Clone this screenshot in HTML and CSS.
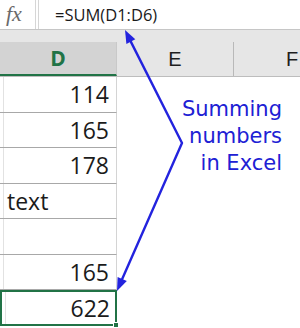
FILE: index.html
```html
<!DOCTYPE html>
<html lang="en">
<head>
  <meta charset="UTF-8" />
  <title>Summing numbers in Excel</title>
  <link rel="stylesheet" href="styles.css">
</head>
<body>
  <div class="sheet">
    <!-- formula bar -->
    <div class="formula-bar">
      <div class="fx">fx</div>
      <div class="formula">=SUM(D1:D6)</div>
    </div>
    <div class="band"></div>

    <!-- column headers -->
    <div class="grid headers">
      <div class="col-head active">D</div>
      <div class="col-head">E</div>
      <div class="col-head">F</div>
    </div>

    <!-- cells -->
    <div class="grid rows">
      <div class="cell num">114</div><div></div><div></div>
      <div class="cell num">165</div><div></div><div></div>
      <div class="cell num">178</div><div></div><div></div>
      <div class="cell">text</div><div></div><div></div>
      <div class="cell"></div><div></div><div></div>
      <div class="cell num">165</div><div></div><div></div>
      <div class="cell num selected">622<span class="handle"></span></div><div></div><div></div>
    </div>

    <div class="note">Summing<br>numbers<br>in Excel</div>

    <svg class="arrows" width="300" height="328" viewBox="0 0 300 328">
      <g stroke="#2323de" stroke-width="2.4" fill="none" stroke-linecap="round" stroke-linejoin="round">
        <polyline points="130.8,41.6 182,143 122.2,279.1" />
      </g>
      <g fill="#2323de">
        <polygon points="125,30 135.3,39.3 126.4,43.9" />
        <polygon points="117,291 126.8,281.1 117.6,277.1" />
      </g>
    </svg>
  </div>
</body>
</html>
```

FILE: styles.css
```css
* { box-sizing: border-box; }
body {
  margin: 0;
  background: #fff;
  font-family: "Open Sans", "Liberation Sans", sans-serif;
}
.sheet {
  position: relative;
  width: 300px;
  height: 328px;
  overflow: hidden;
  background: #fff;
}

/* formula bar */
.formula-bar {
  display: flex;
  height: 30px;
  border-bottom: 1px solid #c6c6c6;
}
.fx {
  width: 36px;
  padding-left: 6px;
  border-right: 1px solid #d6d6d6;
  font-family: "Liberation Serif", serif;
  font-style: italic;
  font-size: 22px;
  line-height: 28px;
  color: #6a6a6a;
}
.formula {
  flex: 1;
  margin-left: 2px;
  padding-left: 16px;
  border-left: 1px solid #d6d6d6;
  font-size: 16.5px;
  line-height: 30px;
  color: #1a1a1a;
}
.band {
  height: 12px;
  background: #e6e6e6;
}

/* grid */
.grid {
  display: grid;
  grid-template-columns: 117px 117px 117px;
}
.headers {
  height: 35px;
  background: #e6e6e6;
  border-bottom: 1px solid #bdbdbd;
}
.col-head {
  text-align: center;
  font-family: "Liberation Sans", sans-serif;
  font-size: 20px;
  line-height: 34px;
  color: #1e1e1e;
  border-right: 1px solid #b9b9b9;
}
.col-head.active {
  background: #d3d3d3;
  font-family: "Open Sans", sans-serif;
  color: #217346;
  font-weight: 700;
  font-size: 21px;
  border-bottom: 2px solid #217346;
  border-right-color: #c9c9c9;
  line-height: 32px;
}
.rows {
  grid-auto-rows: 35.5px;
}
.cell {
  position: relative;
  border-bottom: 1px solid #a8a8a8;
  border-right: 1px solid #d4d4d4;
  background: linear-gradient(90deg, transparent 3px, #e2e2e2 3px, #e2e2e2 4px, transparent 4px);
  padding: 0 7px 0 7px;
  font-size: 23px;
  line-height: 34px;
  color: #1b1b1b;
}
.cell.num { text-align: right; }
.cell.selected {
  border: 2px solid #217346;
  line-height: 32px;
  padding-right: 5px;
}
.handle {
  position: absolute;
  right: -4px;
  bottom: -4px;
  width: 6px;
  height: 6px;
  background: #217346;
  border: 1px solid #fff;
}

/* annotation */
.note {
  position: absolute;
  top: 94px;
  right: 14px;
  padding: 2px 4px 2px 6px;
  background: #fff;
  text-align: right;
  font-family: "DejaVu Sans", Verdana, sans-serif;
  font-size: 21px;
  line-height: 27px;
  color: #2020d4;
}
.arrows {
  position: absolute;
  top: 0;
  left: 0;
}
```
